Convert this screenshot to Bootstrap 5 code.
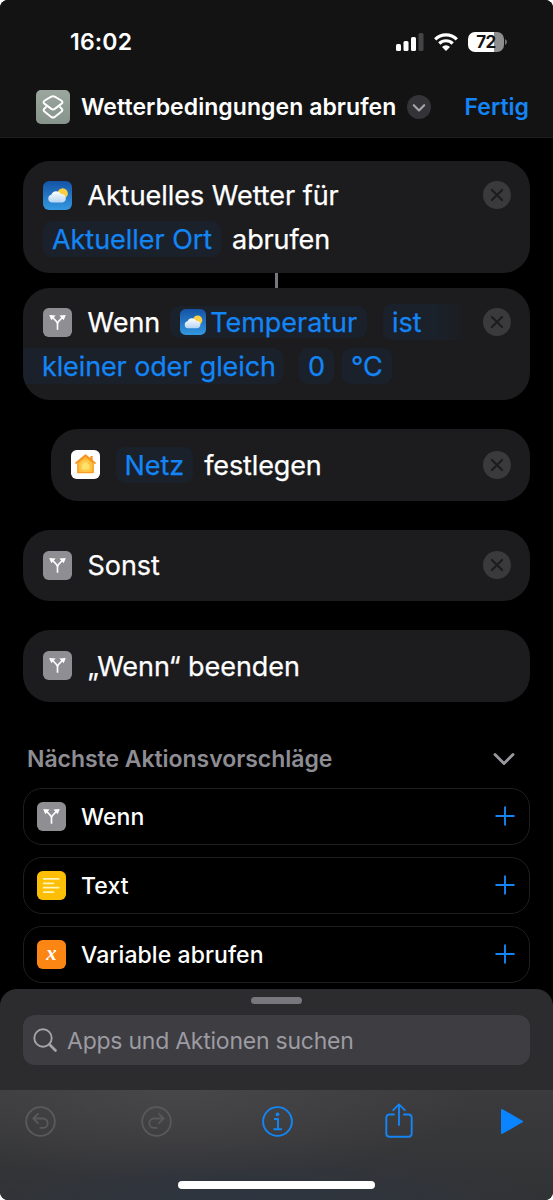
<!DOCTYPE html>
<html lang="de" data-bs-theme="dark">
<head>
<meta charset="utf-8">
<meta name="viewport" content="width=device-width, initial-scale=1">
<title>Wetterbedingungen abrufen</title>
<link href="https://cdn.jsdelivr.net/npm/bootstrap@5.3.0/dist/css/bootstrap.min.css" rel="stylesheet">
<style>
  html, body { background: #fff; }
  body { font-family: Inter, "Liberation Sans", sans-serif; color: #fff; font-size: 23px; line-height: 1.2; }
  svg { display: block; flex: none; }
  .phone { height: 1200px; background: #000; border-radius: 8px; }
  .top-area { height: 138px; background: #131314; border-bottom: 1px solid #1e1e1f; }
  .status { height: 83px; padding-left: 70px; padding-right: 46px; }
  .clock { letter-spacing: .2px; padding-top: 2px; }
  .wifi { margin: 0 10px; }
  .battery { width: 36px; height: 20px; border-radius: 7px; background: linear-gradient(90deg, #fff 72%, #8e8e8e 72%); color: #131314; font-size: 17px; letter-spacing: -.6px; padding-top: 1px; }
  .title-row { height: 48px; padding-left: 36px; padding-right: 24px; }
  .title-row span { padding-top: 2px; }
  .title-text { margin-left: 11px; letter-spacing: .06px; }
  .title-menu { margin-left: 11px; }
  .blue { color: #1485f5; }
  .editor { padding: 23px 23px 0; height: 851px; }
  .action { background: #1c1c1e; border-radius: 27px; padding: 12px 19px 12px 20px; font-size: 27px; letter-spacing: -.04px; min-height: 71.5px; -webkit-text-stroke: .25px; }
  .lead-icon { margin-right: 15.500px; }
  .line { height: 44px; }
  .single { height: 47.5px; }
  .line, .single, .param { padding-top: 2px; }
  .line > svg, .single > svg, .line > .param, .single > .param, .param > svg { margin-top: -2px; }
  .param { color: #1485f5; background: #1a212b; border-radius: 9px; height: 36px; padding-left: 9px; padding-right: 9px; white-space: nowrap; }
  .param-var { height: 32px; padding-left: 10px; padding-right: 10px; margin-left: 10px; }
  .param-open { width: 86px; margin-left: 16px; border-radius: 9px 0 0 9px; background: linear-gradient(90deg, #1a212b 60%, #1c1c1e); }
  .param-cont { border-radius: 0 9px 9px 0; margin-left: -20px; padding-left: 19px; width: 260px; letter-spacing: -.12px; }
  .after { margin-left: 11px; letter-spacing: -.12px; }
  .link-bar { width: 3px; height: 15px; background: #77777e; }
  .spaced { margin-top: 29px; }
  .nested { margin-left: 28px; }
  .section-title { color: #8d8d93; font-weight: 600; height: 30px; margin: 42px 15px 14px 4px; }
  .section-title span { padding-top: 2px; letter-spacing: -.04px; }
  .suggestions { gap: 12px; }
  .suggest { height: 57px; border: 1px solid #1f1f21; border-radius: 19px; padding: 0 14px 0 13px; font-weight: 500; letter-spacing: .08px; }
  .suggest span { margin-left: 15px; padding-top: 3px; }
  .sheet { height: 101px; background: #2c2c2e; border-radius: 17px 17px 0 0; padding: 8px 23px 0; }
  .grabber { width: 51px; height: 7px; border-radius: 4px; background: #77777d; }
  .search { height: 50px; margin-top: 11px; border-radius: 12px; background: #3e3d42; color: #9c9ba2; padding-left: 10px; letter-spacing: -.24px; }
  .search span { margin-left: 9px; padding-top: 3px; }
  .tools { height: 110px; border-radius: 0 0 8px 8px; padding: 0 29px 0 25px; background: radial-gradient(ellipse 300px 60px at 45% 105%, #2e3642, rgba(46,54,66,0)), radial-gradient(ellipse 300px 90px at 32% 0, #474649, rgba(71,70,73,0)), linear-gradient(#3b3b3d, #313234); }
  .tool-row { height: 63px; }
  .redo { margin-left: 85px; }
  .info { margin-left: 90px; }
  .share { margin: -2px 0 0 92px; }
  .home-bar { width: 197px; height: 8px; border-radius: 4px; background: #fff; margin: 28px 0 0 153px; }
</style>
</head>
<body>
<svg width="0" height="0" class="position-absolute">
  <defs>
    <linearGradient id="sky" x1="0" y1="0" x2="0" y2="1"><stop stop-color="#1553a6"/><stop offset="1" stop-color="#3398e0"/></linearGradient>
    <linearGradient id="cloud" x1="0" y1="0" x2="0" y2="1"><stop stop-color="#fff"/><stop offset="1" stop-color="#b5d4f2"/></linearGradient>
    <linearGradient id="sage" x1="0" y1="0" x2="0" y2="1"><stop stop-color="#9ba79e"/><stop offset="1" stop-color="#87948b"/></linearGradient>
    <radialGradient id="glow" cx=".5" cy=".6" r=".6"><stop stop-color="#ffe066"/><stop offset="1" stop-color="#fdb02c"/></radialGradient>
    <symbol id="weather" viewBox="0 0 28 28">
      <rect width="28" height="28" rx="6" fill="url(#sky)"/>
      <circle cx="19" cy="12" r="5" fill="#fbcf45"/>
      <path d="M8.300 20.800a3.900 3.900 0 0 1-.3-7.600 5.200 5.200 0 0 1 9.400-.6 4.200 4.200 0 0 1 1.600 8.200z" fill="url(#cloud)"/>
    </symbol>
    <symbol id="branch" viewBox="0 0 28 28">
      <rect width="28" height="28" rx="5.500" fill="#8e8e93"/>
      <path d="M14 21v-5.500c0-2.500-6-7.500-6-7.500M14 15.500c0-2.500 6-7.500 6-7.500" fill="none" stroke="#fff" stroke-width="1.600"/>
      <path d="M6 6.800l6.200.5-4.200 4.600zM22 6.800l-6.200.5 4.200 4.600z" fill="#fff"/>
    </symbol>
    <symbol id="remove" viewBox="0 0 28 28">
      <circle cx="14" cy="14" r="14" fill="#3a3a3d"/>
      <path d="M8.900 8.900l10.200 10.200M19.100 8.900L8.900 19.100" stroke="#1c1c1e" stroke-width="2.100" stroke-linecap="round"/>
    </symbol>
    <symbol id="plus" viewBox="0 0 20 20"><path d="M10 .5v19M.5 10h19" stroke="#1485f5" stroke-width="1.900"/></symbol>
  </defs>
</svg>

<div class="phone d-flex flex-column overflow-hidden">
  <header class="top-area flex-shrink-0">
    <div class="status d-flex align-items-center">
      <span class="clock fw-semibold me-auto">16:02</span>
      <svg width="28" height="18" viewBox="0 0 28 18"><rect y="11" width="5" height="7" rx="1.500" fill="#fff"/><rect x="7.500" y="8" width="5" height="10" rx="1.500" fill="#fff"/><rect x="15" y="4" width="5" height="14" rx="1.500" fill="#fff"/><rect x="22.500" width="5" height="18" rx="1.500" fill="#444446"/></svg>
      <svg class="wifi" width="24" height="18" viewBox="0 0 24 18"><g fill="none" stroke="#fff" stroke-width="3.200"><path d="M1.200 6.300a15.400 15.400 0 0 1 21.600 0"/><path d="M5.300 10.500a9.500 9.500 0 0 1 13.400 0"/></g><path d="M12 18l-4-4.100a5.700 5.700 0 0 1 8 0z" fill="#fff"/></svg>
      <span class="battery d-flex align-items-center justify-content-center fw-bold">72</span>
      <svg width="3" height="8" viewBox="0 0 3 8"><path d="M1 1q2 1 2 3t-2 3z" fill="#77777a"/></svg>
    </div>
    <div class="title-row d-flex align-items-center">
      <svg width="34" height="34" viewBox="0 0 34 34"><rect width="34" height="34" rx="5" fill="url(#sage)"/><g fill="none" stroke="#fff" stroke-width="2" stroke-linejoin="round"><path d="M15.300 6.700q1.700-.8 3.400 0l6.600 3.800q2.300 1.700 0 3.400l-6.600 5q-1.700 1-3.400 0l-6.600-5q-2.300-1.700 0-3.400z"/><path d="M10.400 16.600L8.700 18.400q-2.200 1.700 0 3.400l6.600 5.200q1.700.9 3.400 0l6.600-5.200q2.200-1.700 0-3.400l-1.700-1.800"/></g></svg>
      <span class="title-text fw-semibold text-nowrap">Wetterbedingungen abrufen</span>
      <svg class="title-menu" width="24" height="24" viewBox="0 0 24 24"><circle cx="12" cy="12" r="12" fill="#343438"/><path d="M6.800 10.200l5.200 5.200 5.200-5.200" fill="none" stroke="#a5a5aa" stroke-width="2.100" stroke-linecap="round" stroke-linejoin="round"/></svg>
      <span class="blue fw-semibold ms-auto">Fertig</span>
    </div>
  </header>

  <main class="editor flex-shrink-0 overflow-hidden">
    <div class="action d-flex">
      <div class="flex-grow-1">
        <div class="line d-flex align-items-center"><svg class="lead-icon" width="29" height="29"><use href="#weather"/></svg>Aktuelles Wetter für</div>
        <div class="line d-flex align-items-center"><span class="param d-flex align-items-center">Aktueller Ort</span><span class="after">abrufen</span></div>
      </div>
      <div class="line d-flex align-items-center"><svg width="28" height="28"><use href="#remove"/></svg></div>
    </div>
    <div class="link-bar mx-auto"></div>
    <div class="action d-flex overflow-hidden">
      <div class="flex-grow-1">
        <div class="line d-flex align-items-center">
          <svg class="lead-icon" width="29" height="29"><use href="#branch"/></svg>Wenn
          <span class="param param-var d-flex align-items-center"><svg class="me-1" width="26" height="26"><use href="#weather"/></svg>Temperatur</span>
          <span class="param param-open d-flex align-items-center">ist</span>
        </div>
        <div class="line d-flex align-items-center">
          <span class="param param-cont d-flex align-items-center">kleiner oder gleich</span>
          <span class="param d-flex align-items-center ms-3">0</span>
          <span class="param d-flex align-items-center ms-2">°C</span>
        </div>
      </div>
      <div class="line d-flex align-items-center"><svg width="28" height="28"><use href="#remove"/></svg></div>
    </div>
    <div class="action nested spaced d-flex">
      <div class="single flex-grow-1 d-flex align-items-center">
        <svg class="lead-icon" width="29" height="29" viewBox="0 0 28 28"><rect width="28" height="28" rx="5.500" fill="#fff"/><path d="M18.700 5.800h2.200v5h-2.200z" fill="#f6921e"/><path d="M6.600 12.300L14 6l7.400 6.300v9.500H6.600z" fill="url(#glow)" stroke="#f99d24" stroke-width="1.300" stroke-linejoin="round"/><path d="M4.700 12.600L14 5l9.300 7.600" fill="none" stroke="#f6921e" stroke-width="1.600" stroke-linejoin="round" stroke-linecap="round"/><path d="M10.500 14.500l3.500-3 3.500 3v4.200h-7z" fill="#ffe269"/></svg>
        <span class="param d-flex align-items-center">Netz</span><span class="after">festlegen</span>
      </div>
      <div class="single d-flex align-items-center"><svg width="28" height="28"><use href="#remove"/></svg></div>
    </div>
    <div class="action spaced d-flex">
      <div class="single flex-grow-1 d-flex align-items-center"><svg class="lead-icon" width="29" height="29"><use href="#branch"/></svg>Sonst</div>
      <div class="single d-flex align-items-center"><svg width="28" height="28"><use href="#remove"/></svg></div>
    </div>
    <div class="action spaced">
      <div class="single d-flex align-items-center"><svg class="lead-icon" width="29" height="29"><use href="#branch"/></svg>„Wenn“ beenden</div>
    </div>

    <div class="section-title d-flex align-items-center justify-content-between">
      <span class="text-nowrap">Nächste Aktionsvorschläge</span>
      <svg width="22" height="14" viewBox="0 0 22 14"><path d="M2 2.500l9 9 9-9" fill="none" stroke="#98989d" stroke-width="2.900" stroke-linecap="round" stroke-linejoin="round"/></svg>
    </div>
    <div class="suggestions d-flex flex-column">
      <div class="suggest d-flex align-items-center">
        <svg width="29" height="29"><use href="#branch"/></svg><span>Wenn</span>
        <svg class="ms-auto" width="20" height="20"><use href="#plus"/></svg>
      </div>
      <div class="suggest d-flex align-items-center">
        <svg width="29" height="29" viewBox="0 0 28 28"><rect width="28" height="28" rx="5.500" fill="#fdbf05"/><path d="M6.500 7.700h14.500M6.500 11.900h9.500M6.500 16.100h14.500M6.500 20.300h9.500" stroke="#fff3b8" stroke-width="1.700" stroke-linecap="round"/></svg><span>Text</span>
        <svg class="ms-auto" width="20" height="20"><use href="#plus"/></svg>
      </div>
      <div class="suggest d-flex align-items-center">
        <svg width="29" height="29" viewBox="0 0 28 28"><rect width="28" height="28" rx="5.500" fill="#fc8613"/><text x="14" y="19" text-anchor="middle" font-family="Liberation Serif, serif" font-style="italic" font-weight="700" font-size="20" fill="#fff">x</text></svg><span>Variable abrufen</span>
        <svg class="ms-auto" width="20" height="20"><use href="#plus"/></svg>
      </div>
    </div>
  </main>

  <section class="sheet flex-shrink-0">
    <div class="grabber mx-auto"></div>
    <div class="search d-flex align-items-center">
      <svg width="25" height="25" viewBox="0 0 25 25"><circle cx="10" cy="10" r="8.700" fill="none" stroke="#a5a4aa" stroke-width="1.900"/><path d="M16.500 16.500l6 6" stroke="#a5a4aa" stroke-width="2.700" stroke-linecap="round"/></svg>
      <span>Apps und Aktionen suchen</span>
    </div>
  </section>
  <footer class="tools flex-shrink-0">
    <div class="tool-row d-flex align-items-center">
      <svg width="31" height="31" viewBox="0 0 31 31" fill="none" stroke="#5a5a5d" stroke-width="1.800" stroke-linecap="round" stroke-linejoin="round"><circle cx="15.500" cy="15.500" r="14.300"/><path d="M13 7.800L8.300 12.500l4.700 4.700M8.500 12.500h9.500a4.700 4.700 0 0 1 0 9.400h-2.500"/></svg>
      <svg class="redo" width="31" height="31" viewBox="0 0 31 31" fill="none" stroke="#59595c" stroke-width="1.800" stroke-linecap="round" stroke-linejoin="round"><circle cx="15.500" cy="15.500" r="14.300"/><path d="M18 7.800l4.700 4.700-4.700 4.700M22.500 12.500H13a4.700 4.700 0 0 0 0 9.400h2.500"/></svg>
      <svg class="info" width="31" height="31" viewBox="0 0 31 31" fill="none" stroke="#1485f5" stroke-width="1.900"><circle cx="15.500" cy="15.500" r="14.400"/><path d="M12 13h4v10M11.500 23.200h8.500"/><circle cx="15.500" cy="8.300" r="1.900" fill="#1485f5" stroke="none"/></svg>
      <svg class="share" width="28" height="35" viewBox="0 0 28 35" fill="none" stroke="#1485f5" stroke-width="1.900" stroke-linecap="round" stroke-linejoin="round"><path d="M9 11.500H4.500Q1.300 11.500 1.300 14.700V30.500Q1.300 33.700 4.500 33.700h19q3.200 0 3.200-3.200V14.700q0-3.200-3.200-3.200H19M14 22V1.800M8.200 7.200L14 1.400l5.800 5.800"/></svg>
      <svg class="ms-auto" width="24" height="27" viewBox="0 0 24 27"><path d="M2 2l20 11.500L2 25z" fill="#0a84ff" stroke="#0a84ff" stroke-width="2" stroke-linejoin="round"/></svg>
    </div>
    <div class="home-bar"></div>
  </footer>
</div>
<script src="https://cdn.jsdelivr.net/npm/bootstrap@5.3.0/dist/js/bootstrap.bundle.min.js"></script>
</body>
</html>
